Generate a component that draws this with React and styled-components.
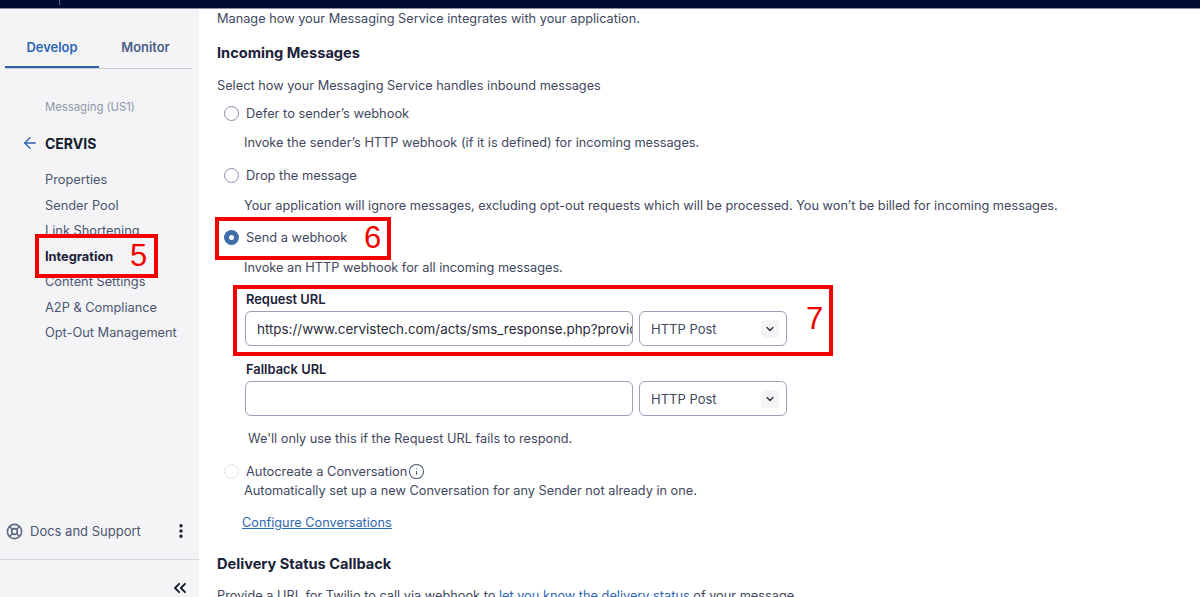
import styled, { createGlobalStyle } from "styled-components";
import { ArrowLeft, ChevronDown, ChevronsLeft, Info, LifeBuoy, MoreVertical } from "lucide-react";

const Global = createGlobalStyle`
  html, body {
    margin: 0;
    height: 100%;
    overflow: hidden;
    background: #fff;
    font-family: Inter, "Liberation Sans", sans-serif;
    color: #282a3b;
  }
`;

const Page = styled.div`
  position: relative;
  width: 1200px;
  height: 597px;
  overflow: hidden;
  display: flex;
  flex-direction: column;
`;

const TopBar = styled.div`
  height: 8px;
  flex: none;
  background: #030b35;
  border-bottom: 1px solid #8a8fa3;
  padding-left: 59px;

  &::before {
    content: "";
    display: block;
    width: 1px;
    height: 5px;
    background: #606b85;
  }
`;

const Body = styled.div`
  flex: 1;
  display: flex;
  min-height: 0;
`;

const Sidebar = styled.aside`
  width: 199px;
  flex: none;
  background: #f4f4f6;
  display: flex;
  flex-direction: column;
  padding-top: 21px;
  box-sizing: border-box;
`;

const Tabs = styled.div`
  display: flex;
  margin: 0 7px 0 5px;
  height: 38px;
  border-bottom: 1px solid #cacdd8;
`;

const Tab = styled.div`
  flex: ${(p) => (p.$active ? "none" : "1")};
  width: ${(p) => (p.$active ? "94px" : "auto")};
  height: 38px;
  box-sizing: border-box;
  display: flex;
  justify-content: center;
  padding-top: 10px;
  font-size: 12.9px;
  line-height: 16px;
  font-weight: 600;
  color: ${(p) => (p.$active ? "#2a65b3" : "#4b5f85")};
  border-bottom: ${(p) => (p.$active ? "2px solid #2b63a9" : "none")};
`;

const Crumb = styled.div`
  margin: 30px 0 0 45px;
  font-size: 11.3px;
  line-height: 16px;
  color: #8f96ab;
`;

const ServiceRow = styled.div`
  display: flex;
  align-items: center;
  height: 22px;
  margin: 17px 0 0 21px;
  gap: 6px;
  font-size: 14px;
  font-weight: 700;
  color: #121c2d;
  svg {
    color: #2b63a9;
  }
`;

const NavList = styled.nav`
  display: flex;
  flex-direction: column;
  margin: 13px 0 0 45px;
`;

const NavItem = styled.div`
  height: 25.5px;
  display: flex;
  align-items: center;
  font-size: 12.8px;
  font-weight: ${(p) => (p.$active ? 700 : 400)};
  color: ${(p) => (p.$active ? "#1a2238" : "#4b5671")};
  white-space: nowrap;
`;

const DocsRow = styled.div`
  margin-top: auto;
  display: flex;
  align-items: center;
  height: 20px;
  padding: 0 9px 0 6px;
  gap: 7px;
  font-size: 13px;
  color: #4b5671;
  svg:first-child {
    color: #606b85;
  }
  svg:last-child {
    margin-left: auto;
    color: #121c2d;
  }
`;

const SideDivider = styled.div`
  height: 1px;
  margin-top: 18px;
  background: #d4d6de;
`;

const CollapseRow = styled.div`
  display: flex;
  justify-content: flex-end;
  padding: 18px 9px 0 0;
  height: 19px;
  color: #121c2d;
`;

const Main = styled.main`
  flex: 1;
  min-width: 0;
  padding: 1px 0 0 18px;
  overflow: hidden;
`;

const Text = styled.p`
  margin: ${(p) => p.$m || "0"};
  padding-left: ${(p) => p.$indent || "0"};
  font-size: 12.75px;
  line-height: 18px;
  color: #3f4860;
  white-space: nowrap;
`;

const Heading = styled.h2`
  margin: ${(p) => p.$m || "0"};
  font-size: 14.6px;
  line-height: 20px;
  font-weight: 700;
  color: #1b2238;
`;

const RadioRow = styled.div`
  display: flex;
  align-items: center;
  height: 18px;
  margin: ${(p) => p.$m || "0"};
  padding-left: 7px;
  font-size: 12.85px;
  color: #3f4860;
`;

const Radio = styled.span`
  width: 15px;
  height: 15px;
  flex: none;
  box-sizing: border-box;
  margin-right: 7px;
  border-radius: 50%;
  background: #fff;
  border: 1px solid ${(p) => (p.$muted ? "#dfe1e7" : "#8891aa")};

  ${(p) =>
    p.$checked &&
    `
    background: #3f6cab;
    border: none;
    display: flex;
    align-items: center;
    justify-content: center;
    &::after {
      content: "";
      width: 5px;
      height: 5px;
      border-radius: 50%;
      background: #fff;
    }
  `}
`;

const FieldBlock = styled.div`
  margin: ${(p) => p.$m || "0"};
  padding-left: 28px;
`;

const FieldLabel = styled.div`
  font-size: 12.9px;
  line-height: 16px;
  font-weight: 600;
  color: #1b2238;
  padding-left: 1px;
`;

const FieldRow = styled.div`
  display: flex;
  gap: 6px;
  margin-top: 3px;
`;

const UrlInput = styled.input`
  width: 388px;
  height: 35px;
  box-sizing: border-box;
  padding: 0 0 0 11px;
  border: 1px solid #9aa1b6;
  border-radius: 6px;
  background: #fff;
  font: 400 13.4px Inter, "Liberation Sans", sans-serif;
  color: #282a3b;
  outline: none;
`;

const SelectBox = styled.div`
  width: 148px;
  height: 35px;
  box-sizing: border-box;
  display: flex;
  align-items: center;
  justify-content: space-between;
  padding: 0 7px 0 11px;
  border: 1px solid #9aa1b6;
  border-radius: 6px;
  font-size: 13px;
  color: #3f4860;
`;

const Chevron = styled.span`
  width: 18px;
  height: 18px;
  border-radius: 4px;
  background: #f4f4f6;
  display: flex;
  align-items: center;
  justify-content: center;
  color: #282a3b;
`;

const InfoIcon = styled(Info)`
  margin-left: 1px;
  color: #4b5671;
`;

const Link = styled.a`
  color: #2f66b0;
  text-decoration: ${(p) => (p.$underline ? "underline" : "none")};
`;

const Marker = styled.div`
  position: absolute;
  left: ${(p) => p.$x}px;
  top: ${(p) => p.$y}px;
  width: ${(p) => p.$w}px;
  height: ${(p) => p.$h}px;
  box-sizing: border-box;
  border: 4px solid #f50000;
`;

const MarkerNumber = styled.span`
  position: absolute;
  left: ${(p) => p.$x}px;
  top: ${(p) => p.$y}px;
  font-family: "Liberation Sans", Arial, sans-serif;
  font-size: 31px;
  line-height: 34px;
  color: #f50000;
`;

const navItems = ["Properties", "Sender Pool", "Link Shortening", "Integration", "Content Settings", "A2P & Compliance", "Opt-Out Management"];

function UrlField({ label, value, m }) {
  return (
    <FieldBlock $m={m}>
      <FieldLabel>{label}</FieldLabel>
      <FieldRow>
        <UrlInput readOnly value={value} />
        <SelectBox>
          HTTP Post
          <Chevron>
            <ChevronDown size={12} strokeWidth={2.5} />
          </Chevron>
        </SelectBox>
      </FieldRow>
    </FieldBlock>
  );
}

export default function App() {
  return (
    <Page>
      <Global />
      <TopBar />
      <Body>
        <Sidebar>
          <Tabs>
            <Tab $active>Develop</Tab>
            <Tab>Monitor</Tab>
          </Tabs>
          <Crumb>Messaging (US1)</Crumb>
          <ServiceRow>
            <ArrowLeft size={18} strokeWidth={1.75} />
            CERVIS
          </ServiceRow>
          <NavList>
            {navItems.map((item) => (
              <NavItem key={item} $active={item === "Integration"}>
                {item}
              </NavItem>
            ))}
          </NavList>
          <DocsRow>
            <LifeBuoy size={17} strokeWidth={2.25} />
            Docs and Support
            <MoreVertical size={18} strokeWidth={2.5} />
          </DocsRow>
          <SideDivider />
          <CollapseRow>
            <ChevronsLeft size={20} strokeWidth={2.25} />
          </CollapseRow>
        </Sidebar>
        <Main>
          <Text>Manage how your Messaging Service integrates with your application.</Text>
          <Heading $m="15px 0 0">Incoming Messages</Heading>
          <Text $m="14px 0 0">Select how your Messaging Service handles inbound messages</Text>
          <RadioRow $m="9px 0 0">
            <Radio />
            Defer to sender’s webhook
          </RadioRow>
          <Text $m="12px 0 0" $indent="27px">
            Invoke the sender’s HTTP webhook (if it is defined) for incoming messages.
          </Text>
          <RadioRow $m="14px 0 0">
            <Radio />
            Drop the message
          </RadioRow>
          <Text $m="13px 0 0" $indent="27px">
            Your application will ignore messages, excluding opt-out requests which will be processed. You won’t be billed for incoming messages.
          </Text>
          <RadioRow $m="13px 0 0">
            <Radio $checked />
            Send a webhook
          </RadioRow>
          <Text $m="13px 0 0" $indent="27px">
            Invoke an HTTP webhook for all incoming messages.
          </Text>
          <UrlField m="15px 0 0" label="Request URL" value="https://www.cervistech.com/acts/sms_response.php?provider=twilio" />
          <UrlField m="16px 0 0" label="Fallback URL" value="" />
          <Text $m="14px 0 0" $indent="31px">
            We'll only use this if the Request URL fails to respond.
          </Text>
          <RadioRow $m="14px 0 0">
            <Radio $muted />
            Autocreate a Conversation
            <InfoIcon size={17} strokeWidth={1.5} />
          </RadioRow>
          <Text $m="2px 0 0" $indent="27px">
            Automatically set up a new Conversation for any Sender not already in one.
          </Text>
          <Text $m="14px 0 0" $indent="25px">
            <Link $underline href="#">Configure Conversations</Link>
          </Text>
          <Heading $m="22px 0 0">Delivery Status Callback</Heading>
          <Text $m="13px 0 0">
            Provide a URL for Twilio to call via webhook to <Link href="#">let you know the delivery status</Link> of your message.
          </Text>
        </Main>
      </Body>

      <Marker $x={35} $y={234} $w={123} $h={44} />
      <MarkerNumber $x={130} $y={239}>5</MarkerNumber>
      <Marker $x={215} $y={217} $w={176} $h={43} />
      <MarkerNumber $x={364} $y={221}>6</MarkerNumber>
      <Marker $x={233} $y={285} $w={600} $h={71} />
      <MarkerNumber $x={806} $y={302}>7</MarkerNumber>
    </Page>
  );
}
